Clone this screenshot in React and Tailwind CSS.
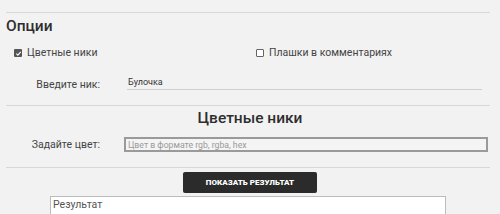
import React, { useState } from "react";

export default function App() {
  const [colored, setColored] = useState(true);
  const [badges, setBadges] = useState(false);
  const [nick, setNick] = useState("Булочка");
  const [color, setColor] = useState("");

  return (
    <div className="w-[500px] h-[214px] overflow-hidden bg-[#f2f2f2] text-[#333] font-['Roboto',sans-serif]">
      <div className="pt-[12px] pl-[6px] pr-[10px]">
        <div className="border-t border-[#d8d8d8]" />

        {/* Options */}
        <h2 className="mt-[3px] text-[15.5px] leading-[20px] font-medium text-[#2e2e2e]">
          Опции
        </h2>

        <div className="mt-[8px] grid grid-cols-[250px_1fr] h-[18px] items-center">
          <label className="flex items-center pl-[8px] gap-[5px] text-[10.5px] text-[#444]">
            <input
              type="checkbox"
              checked={colored}
              onChange={(e) => setColored(e.target.checked)}
              className="hidden"
            />
            <span className="w-[8px] h-[8px] rounded-[1px] bg-[#555] flex items-center justify-center">
              {colored && (
                <svg viewBox="0 0 8 8" className="w-[7px] h-[7px]">
                  <path d="M1.5 4.2 L3.3 5.8 L6.5 2.2" stroke="#fff" strokeWidth="1.3" fill="none" />
                </svg>
              )}
            </span>
            Цветные ники
          </label>
          <label className="flex items-center gap-[5px] text-[10.5px] text-[#444]">
            <input
              type="checkbox"
              checked={badges}
              onChange={(e) => setBadges(e.target.checked)}
              className="hidden"
            />
            <span className="w-[8px] h-[8px] rounded-[1px] border border-[#666] bg-white" />
            Плашки в комментариях
          </label>
        </div>

        {/* Nick */}
        <div className="mt-[8px] flex items-end h-[20px]">
          <div className="w-[94px] text-right text-[10.5px] text-[#444] leading-[14px] mb-[-2px]">
            Введите ник:
          </div>
          <input
            value={nick}
            onChange={(e) => setNick(e.target.value)}
            className="ml-[27px] w-[355px] h-[20px] bg-transparent border-b border-[#cfcfcf] text-[9px] leading-[12px] text-[#333] px-[1px] pt-[4px] pb-0 outline-none"
          />
        </div>

        <div className="mt-[15px] border-t border-[#d8d8d8]" />

        {/* Colored nicks */}
        <h2 className="mt-[2px] text-center text-[15.5px] leading-[20px] font-medium text-[#2e2e2e] pl-[4px]">
          Цветные ники
        </h2>

        <div className="mt-[9px] flex items-center h-[15px]">
          <div className="w-[94px] text-right text-[10.5px] text-[#444]">Задайте цвет:</div>
          <input
            value={color}
            onChange={(e) => setColor(e.target.value)}
            placeholder="Цвет в формате rgb, rgba, hex"
            className="ml-[24px] w-[364px] h-[15px] bg-[#f4f4f4] border-2 border-[#9a9a9a] text-[8.7px] px-[2px] placeholder-[#9a9a9a] outline-none"
          />
        </div>

        <div className="mt-[15px] border-t border-[#d8d8d8]" />

        <div className="mt-[4px] flex justify-center pl-[4px]">
          <button className="w-[134px] h-[21px] rounded-[2px] bg-[#2b2b2b] text-white text-[8px] font-black uppercase">
            Показать результат
          </button>
        </div>

        <textarea
          placeholder="Результат"
          className="mt-[3px] ml-[44px] block w-[396px] h-[40px] bg-white border border-[#bcbcbc] text-[10.5px] px-[2px] py-[1px] leading-[14px] placeholder-[#555] outline-none resize-none"
        />
      </div>
    </div>
  );
}
